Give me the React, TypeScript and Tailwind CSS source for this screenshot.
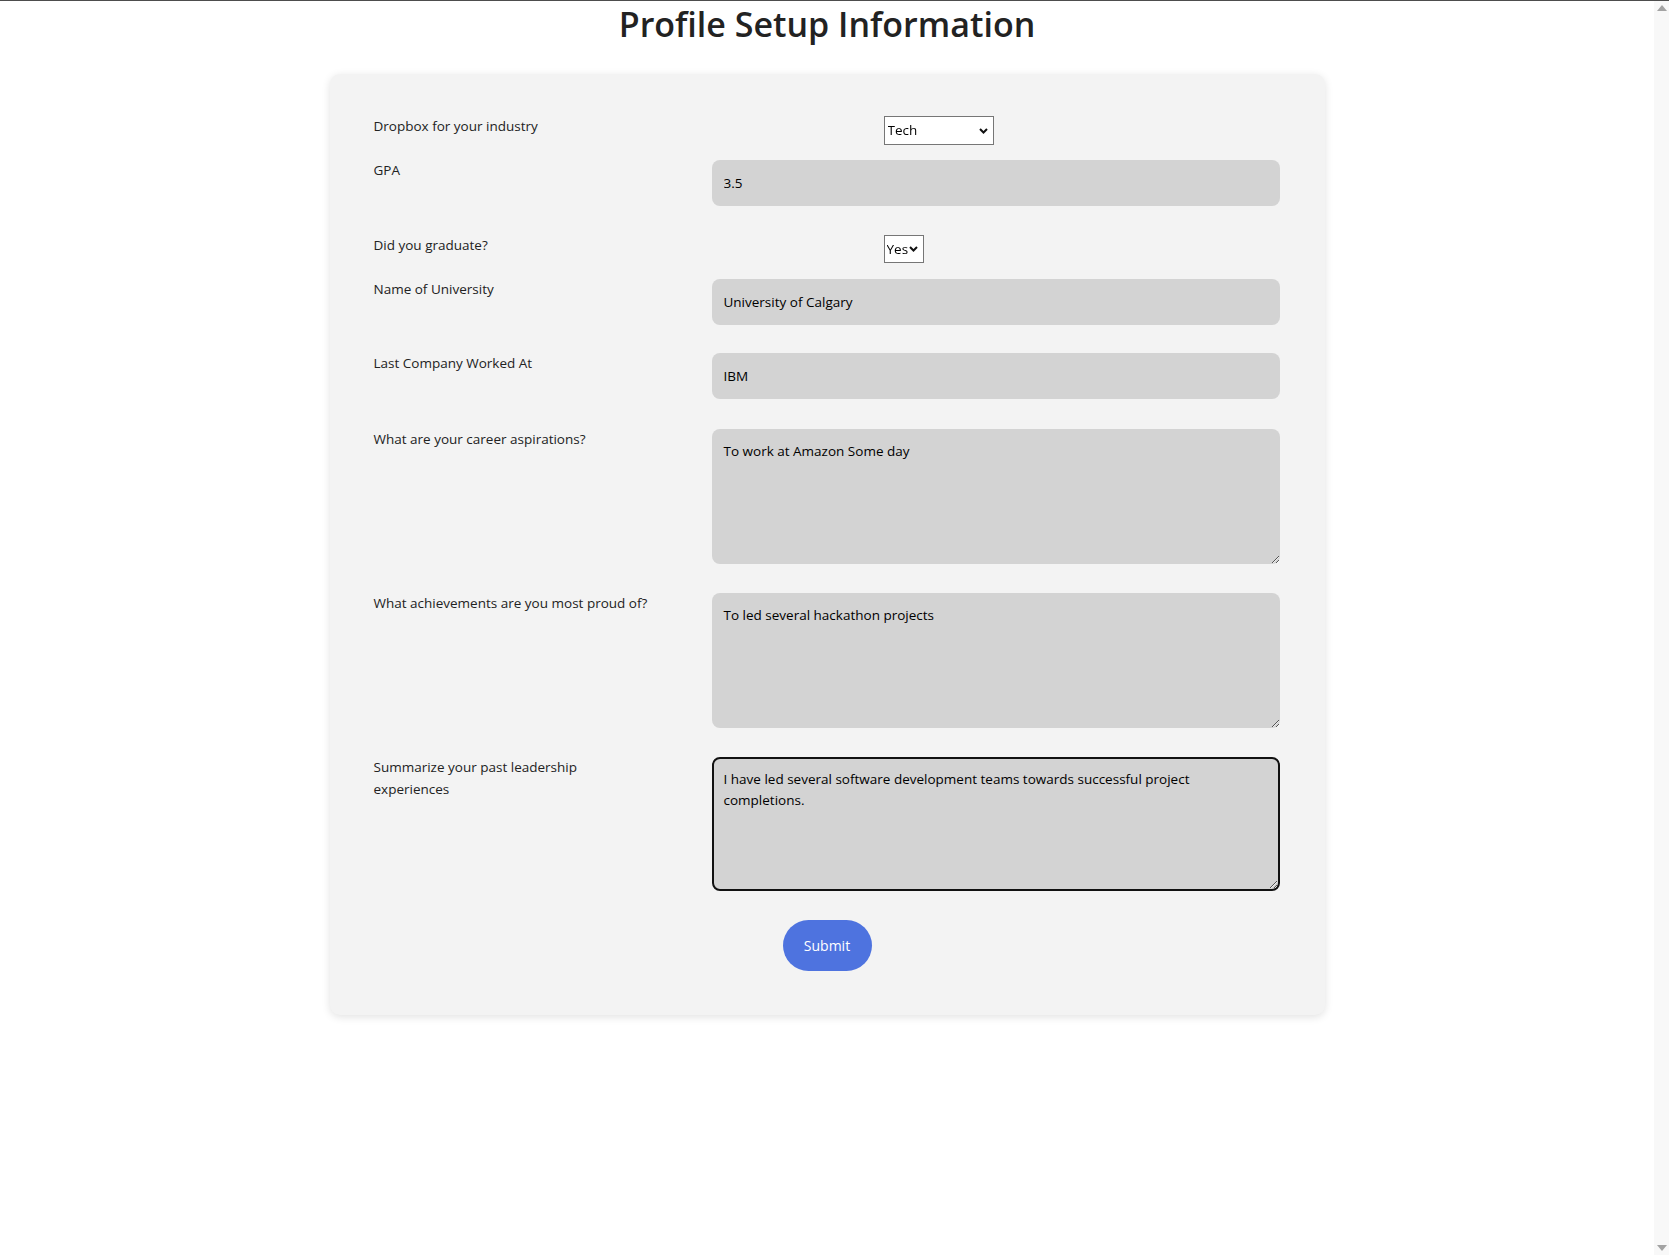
import React, { useEffect, useRef } from "react"

const font = { fontFamily: '"Open Sans", "Noto Sans", sans-serif' }

function Chevron() {
  return (
    <svg className="pointer-events-none absolute right-[6px] top-1/2 -translate-y-1/2" width="9" height="6" viewBox="0 0 9 6">
      <path d="M1 1l3.5 3.5L8 1" fill="none" stroke="#111" strokeWidth="2" />
    </svg>
  )
}

function Label({ children }: { children: React.ReactNode }) {
  return <label className="text-[13.5px] leading-[22px] text-[#222] -mt-[1px] pr-10">{children}</label>
}

export default function App() {
  const leadRef = useRef<HTMLTextAreaElement>(null)

  useEffect(() => {
    const el = leadRef.current
    if (el) {
      el.focus()
      el.setSelectionRange(el.value.length, el.value.length)
    }
  }, [])

  const inputCls = "w-full h-[46px] rounded-lg bg-[#d3d3d3] px-3 text-[13.5px] text-black outline-none"
  const areaCls = "w-full h-[135px] rounded-lg bg-[#d3d3d3] px-3 pt-[12px] pb-[10px] text-[13.5px] leading-[20px] text-black outline-none block"

  return (
    <div className="h-screen flex bg-white border-t border-[#4d4d4d]" style={font}>
      <div className="flex-1 flex flex-col items-center">
        <h1 className="text-[34px] font-semibold leading-[44px] text-[#222] mt-[1px]">Profile Setup Information</h1>
        <div className="mt-[28px] w-[995px] bg-[#f3f3f3] rounded-[10px] shadow-[0_2px_8px_rgba(0,0,0,0.12)] px-[44px] pt-[42px] pb-[44px]">
          <form className="grid grid-cols-[338px_568px] items-start">
            <Label>Dropbox for your industry</Label>
            <div className="mb-[15px]">
              <div className="relative ml-[172px] w-[110px]">
                <select defaultValue="Tech" className="appearance-none w-full h-[29px] bg-white border border-[#767676] pl-[3px] text-[13.5px] text-black">
                  <option>Tech</option>
                  <option>Finance</option>
                  <option>Healthcare</option>
                </select>
                <Chevron />
              </div>
            </div>

            <Label>GPA</Label>
            <div className="mb-[29px]">
              <input className={inputCls} defaultValue="3.5" />
            </div>

            <Label>Did you graduate?</Label>
            <div className="mb-[16px]">
              <div className="relative ml-[172px] w-[40px]">
                <select defaultValue="Yes" className="appearance-none w-full h-[28px] bg-white border border-[#767676] pl-[2px] text-[13.5px] text-black">
                  <option>Yes</option>
                  <option>No</option>
                </select>
                <Chevron />
              </div>
            </div>

            <Label>Name of University</Label>
            <div className="mb-[28px]">
              <input className={inputCls} defaultValue="University of Calgary" />
            </div>

            <Label>Last Company Worked At</Label>
            <div className="mb-[30px]">
              <input className={inputCls} defaultValue="IBM" />
            </div>

            <Label>What are your career aspirations?</Label>
            <div className="mb-[29px]">
              <textarea className={areaCls} defaultValue="To work at Amazon Some day" />
            </div>

            <Label>What achievements are you most proud of?</Label>
            <div className="mb-[29px]">
              <textarea className={areaCls} defaultValue="To led several hackathon projects" />
            </div>

            <Label>
              <span className="block w-[210px]">Summarize your past leadership experiences</span>
            </Label>
            <div className="mb-[29px]">
              <textarea
                ref={leadRef}
                className="w-full h-[134px] rounded-lg bg-[#d3d3d3] px-[10px] pt-[10px] pb-[8px] text-[13.5px] leading-[21px] text-black outline-none block border-2 border-[#111] caret-black"
                defaultValue="I have led several software development teams towards successful project completions."
              />
            </div>
          </form>
          <div className="flex justify-center">
            <button type="button" className="w-[89px] h-[51px] rounded-full bg-[#4e73df] text-white text-[14px]">Submit</button>
          </div>
        </div>
      </div>
      <div className="w-[15px] bg-[#f8f8f8] flex flex-col justify-between items-center py-[4px]">
        <div className="w-0 h-0 border-x-[5px] border-x-transparent border-b-[6px] border-b-[#a3a3a3]" />
        <div className="w-0 h-0 border-x-[5px] border-x-transparent border-t-[6px] border-t-[#a3a3a3]" />
      </div>
    </div>
  )
}
